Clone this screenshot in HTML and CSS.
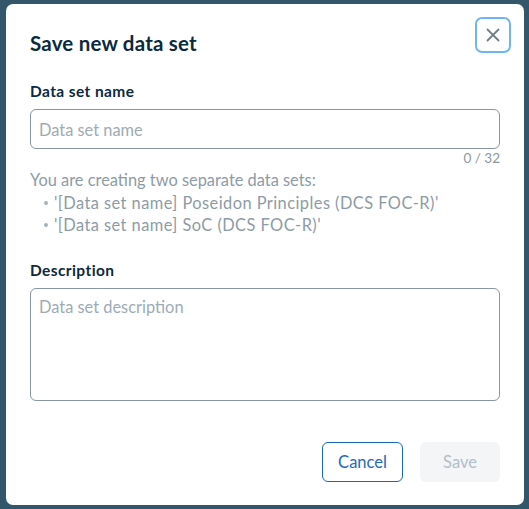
FILE: index.html
```html
<!DOCTYPE html>
<html>
<head>
<meta charset="utf-8">
<link rel="stylesheet" href="styles.css">
</head>
<body>
<div class="dialog">
  <div class="header">
    <h1 class="title">Save new data set</h1>
    <button class="close" aria-label="Close">
      <svg width="14" height="14" viewBox="0 0 14 14"><path d="M1.5 1.5 L12.5 12.5 M12.5 1.5 L1.5 12.5" stroke="#6f7f8a" stroke-width="1.8" stroke-linecap="round" fill="none"/></svg>
    </button>
  </div>
  <label class="label first">Data set name</label>
  <div class="input"><span class="placeholder">Data set name</span></div>
  <div class="counter">0 / 32</div>
  <div class="help">
    <div class="help-line">You are creating two separate data sets:</div>
    <ul class="list">
      <li>'[Data set name] Poseidon Principles (DCS FOC-R)'</li>
      <li>'[Data set name] SoC (DCS FOC-R)'</li>
    </ul>
  </div>
  <label class="label second">Description</label>
  <div class="textarea"><span class="placeholder">Data set description</span></div>
  <div class="footer">
    <button class="btn cancel">Cancel</button>
    <button class="btn save">Save</button>
  </div>
</div>
</body>
</html>
```

FILE: styles.css
```css
html, body {
  margin: 0;
  padding: 0;
  background: #34566a;
  width: 529px;
  height: 509px;
  overflow: hidden;
}
body {
  font-family: Lato, "Open Sans", sans-serif;
}
.dialog {
  box-sizing: border-box;
  margin: 4px 0 0 6px;
  width: 518px;
  height: 501px;
  background: #ffffff;
  border-radius: 7px;
  padding: 13px 24px 23px 24px;
  display: flex;
  flex-direction: column;
}
.header {
  display: flex;
  justify-content: space-between;
  align-items: flex-start;
  margin-right: -11px;
}
.title {
  margin: 12px 0 0 0;
  font-size: 20.5px;
  line-height: 28px;
  font-weight: 700;
  letter-spacing: 0.2px;
  color: #0c2a3d;
}
.close {
  width: 36px;
  height: 36px;
  box-sizing: border-box;
  border: 2px solid #6fb5f3;
  border-radius: 7px;
  background: #fff;
  padding: 0;
  display: flex;
  align-items: center;
  justify-content: center;
}
.label {
  display: block;
  font-size: 15.5px;
  line-height: 20px;
  font-weight: 700;
  letter-spacing: 0.4px;
  color: #0c2a3d;
}
.label.first { margin-top: 24px; }
.label.second { margin-top: 23px; }
.input, .textarea {
  margin-top: 8px;
  box-sizing: border-box;
  border: 1px solid #8796a2;
  border-radius: 6px;
  padding: 0 8px;
  font-size: 16.4px;
}
.input {
  height: 40px;
  display: flex;
  align-items: center;
}
.textarea {
  height: 113px;
  padding-top: 7px;
  line-height: 22px;
}
.placeholder {
  color: #9eabb5;
}
.counter {
  text-align: right;
  font-size: 13.5px;
  line-height: 18px;
  color: #8a98a3;
}
.help {
  margin-top: 2px;
  font-size: 16.4px;
  line-height: 22.5px;
  color: #8d9ba6;
}
.list {
  margin: 0;
  padding: 0;
  list-style: none;
}
.list li {
  display: flex;
  align-items: center;
  letter-spacing: 0.45px;
}
.list li::before {
  content: "";
  width: 4px;
  height: 4px;
  border-radius: 50%;
  background: #a5b1ba;
  margin: 0 6px 0 14px;
}
.footer {
  margin-top: auto;
  display: flex;
  justify-content: flex-end;
  gap: 17px;
}
.btn {
  height: 40px;
  box-sizing: border-box;
  border-radius: 6px;
  font-family: Lato, "Open Sans", sans-serif;
  font-size: 16.5px;
  padding: 0;
}
.cancel {
  width: 81px;
  border: 1px solid #1667bd;
  background: #fff;
  color: #1a6ac0;
}
.save {
  width: 80px;
  border: none;
  background: #f3f5f7;
  color: #b2bec8;
}
```
